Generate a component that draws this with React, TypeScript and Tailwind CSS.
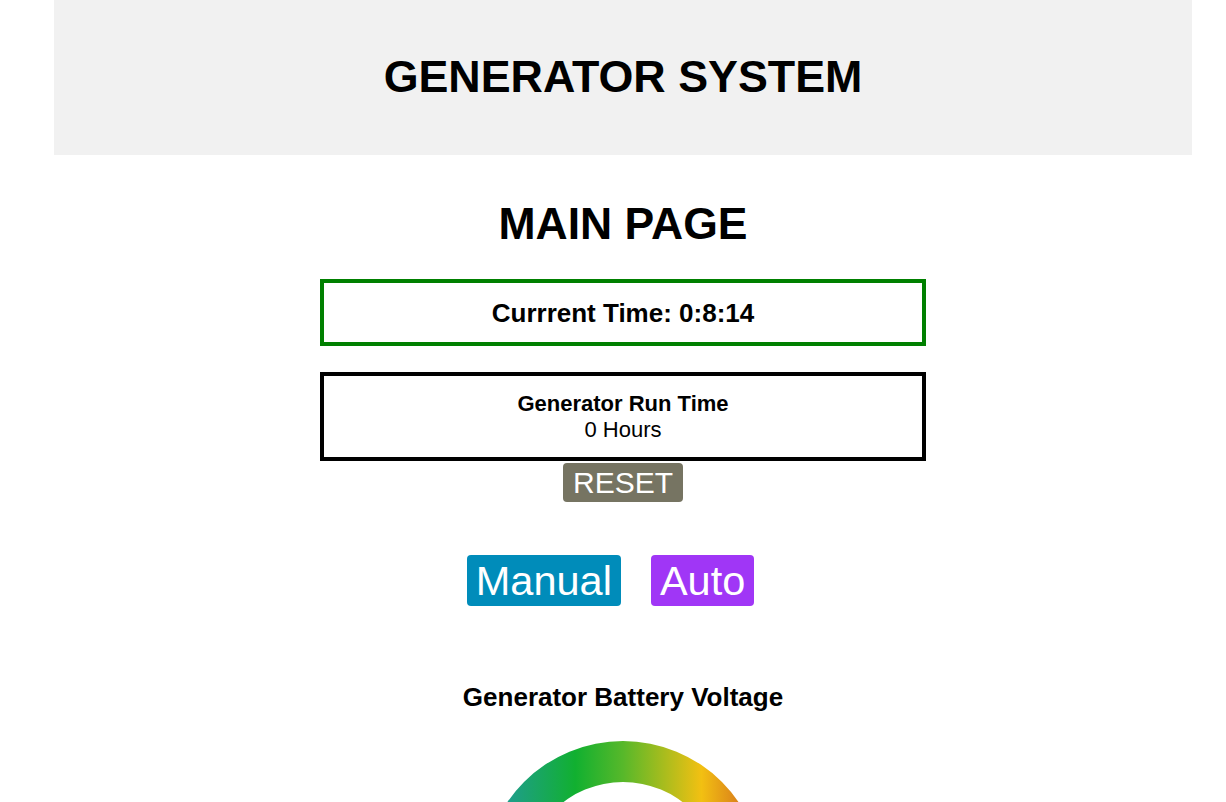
import React from 'react'

// Battery gauge: half ring with a horizontal colour sweep
function Gauge() {
  const cx = 150
  const cy = 150
  const ro = 140
  const ri = 99
  const d = `M ${cx - ro} ${cy} A ${ro} ${ro} 0 0 1 ${cx + ro} ${cy} L ${cx + ri} ${cy} A ${ri} ${ri} 0 0 0 ${cx - ri} ${cy} Z`
  return (
    <svg width="300" height="160" viewBox="0 0 300 160">
      <defs>
        <linearGradient id="gaugeSweep" x1="0" y1="0" x2="1" y2="0">
          <stop offset="0%" stopColor="#2497ac" />
          <stop offset="33%" stopColor="#11b030" />
          <stop offset="50%" stopColor="#57b82a" />
          <stop offset="78%" stopColor="#f2c012" />
          <stop offset="100%" stopColor="#cc5a20" />
        </linearGradient>
      </defs>
      <path d={d} fill="url(#gaugeSweep)" />
    </svg>
  )
}

export default function App() {
  return (
    <div className="min-h-screen bg-white font-['Liberation_Sans',Arial,sans-serif] text-black">
      <div className="ml-[54px] w-[1138px]">
        {/* Title bar */}
        <header className="h-[155px] bg-[#f1f1f1] flex items-center justify-center pb-[3px]">
          <h1 className="text-[44.8px] leading-[50px] font-bold">GENERATOR SYSTEM</h1>
        </header>

        <main className="flex flex-col items-center">
          <h2 className="mt-[44px] text-[44.5px] leading-[50px] font-bold">MAIN PAGE</h2>

          {/* Clock */}
          <div className="mt-[30px] w-[606px] h-[67px] border-4 border-[#008000] flex items-center justify-center">
            <span className="text-[26px] leading-[30px] font-bold">Currrent Time: 0:8:14</span>
          </div>

          {/* Run time */}
          <div className="mt-[26px] w-[606px] h-[89px] border-4 border-black flex flex-col items-center justify-center text-[22px] leading-[26px]">
            <span className="font-bold">Generator Run Time</span>
            <span>0 Hours</span>
          </div>

          <button className="mt-[2px] w-[120px] h-[39px] rounded-[4px] bg-[#767462] text-white text-[30px] leading-[34px] flex items-center justify-center">
            RESET
          </button>

          {/* Mode buttons — sit a little left of centre, like the original inline buttons */}
          <div className="mt-[53px] mr-[25px] flex gap-[30px]">
            <button className="h-[51px] px-[9px] rounded-[4px] bg-[#008cba] text-white text-[41.5px] leading-[47px] flex items-center">
              Manual
            </button>
            <button className="h-[51px] px-[9px] rounded-[4px] bg-[#a036f6] text-white text-[41.5px] leading-[47px] flex items-center">
              Auto
            </button>
          </div>

          <h3 className="mt-[76px] text-[26px] leading-[30px] font-bold">Generator Battery Voltage</h3>

          <div className="mt-[19px]">
            <Gauge />
          </div>
        </main>
      </div>
    </div>
  )
}
